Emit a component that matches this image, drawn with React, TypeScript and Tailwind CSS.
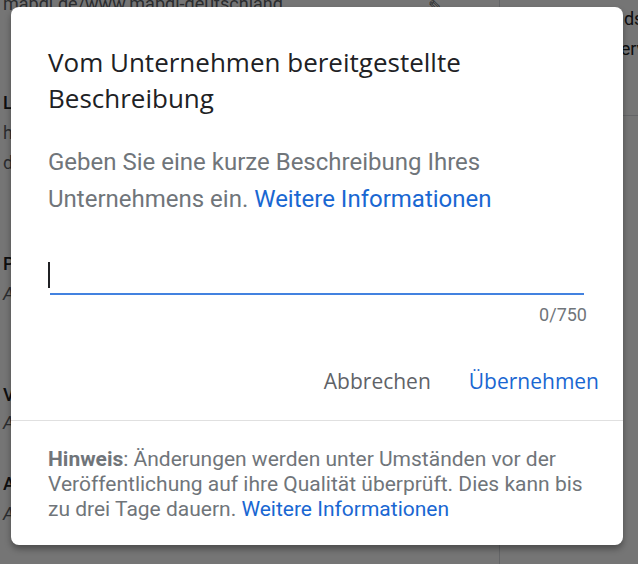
import React from "react";

export default function App() {
  return (
    <div className="relative h-[564px] w-[638px] overflow-hidden bg-white" style={{ fontFamily: "Roboto, 'Liberation Sans', sans-serif" }}>
      {/* underlying page */}
      <div className="flex h-full">
        <div className="flex w-[500px] shrink-0 flex-col border-r border-[#dadce0] pl-[3px]">
          <div className="flex h-[14px] items-end justify-between pr-[56px]">
            <span className="-mt-[10px] text-[18px] leading-[20px] text-[#5f6368]">mapdi.de/www.mapdi-deutschland</span>
            <span className="text-[18px] leading-[14px] text-[#5f6368]">✎</span>
          </div>
          <div className="mt-[74px] flex flex-col text-[18px] leading-[30px] text-[#202124]">
            <span className="font-medium">Logo</span>
            <span className="text-[#5f6368]">hinzufügen</span>
            <span className="text-[#5f6368]">dies</span>
          </div>
          <div className="mt-[71px] flex flex-col text-[18px] leading-[30px]">
            <span className="font-medium text-[#202124]">Profil</span>
            <span className="italic text-[#5f6368]">Angaben</span>
          </div>
          <div className="mt-[72px] flex flex-col text-[18px] leading-[28px]">
            <span className="font-medium text-[#202124]">Verkauf</span>
            <span className="italic text-[#5f6368]">Angaben</span>
          </div>
          <div className="mt-[32px] flex flex-col text-[18px] leading-[30px]">
            <span className="font-medium text-[#202124]">Adresse</span>
            <span className="italic text-[#5f6368]">Angaben</span>
          </div>
        </div>
        <div className="flex min-w-0 flex-1 flex-col overflow-hidden">
          <div className="h-[116px] border-b border-[#dadce0] pt-[4px] text-[18px] leading-[30px] text-[#202124]">
            <div className="whitespace-nowrap pl-[93px]">Kundsw</div>
            <div className="whitespace-nowrap pl-[110px]">Server</div>
          </div>
        </div>
      </div>

      {/* overlay */}
      <div className="absolute inset-0 bg-black/[0.54]" />

      {/* dialog */}
      <div className="absolute left-[11px] top-[7px] flex h-[538px] w-[612px] flex-col rounded-[8px] bg-white shadow-[0_4px_6px_rgba(0,0,0,0.35)]">
        <div className="flex flex-col px-[37px] pt-[37px]">
          <h2 className="text-[26px] leading-[36px] text-[#202124]" style={{ fontFamily: "'Open Sans', Roboto, sans-serif" }}>
            Vom Unternehmen bereitgestellte Beschreibung
          </h2>
          <p className="mt-[28px] text-[24px] leading-[37px] text-[#70757a]">
            Geben Sie eine kurze Beschreibung Ihres Unternehmens ein.{" "}
            <span className="text-[#1967d2]">Weitere Informationen</span>
          </p>
          <div className="mt-[44px] flex flex-col">
            <div className="flex h-[26px] items-end">
              <div className="h-[26px] w-[2px] bg-[#202124]" />
            </div>
            <div className="ml-[2px] mr-[2px] mt-[5px] h-[2px] bg-[#4382e0]" />
            <div className="mr-[-1px] mt-[10px] text-right text-[18px] leading-[20px] text-[#70757a]">0/750</div>
          </div>
          <div className="mr-[-13px] mt-[44px] flex items-center justify-end gap-[38px] text-[21px] font-medium leading-[24px]" style={{ fontFamily: "'Open Sans', Roboto, sans-serif" }}>
            <span className="text-[#5f6368]">Abbrechen</span>
            <span className="text-[#1967d2]">Übernehmen</span>
          </div>
        </div>
        <div className="mt-[27px] h-px bg-[#e0e0e0]" />
        <div className="px-[37px] pt-[26px]">
          <p className="text-[21px] leading-[25px] text-[#70757a]">
            <span className="font-bold">Hinweis</span>: Änderungen werden unter Umständen vor der Veröffentlichung auf ihre Qualität überprüft. Dies kann bis zu drei Tage dauern.{" "}
            <span className="text-[#1967d2]">Weitere Informationen</span>
          </p>
        </div>
      </div>
    </div>
  );
}
